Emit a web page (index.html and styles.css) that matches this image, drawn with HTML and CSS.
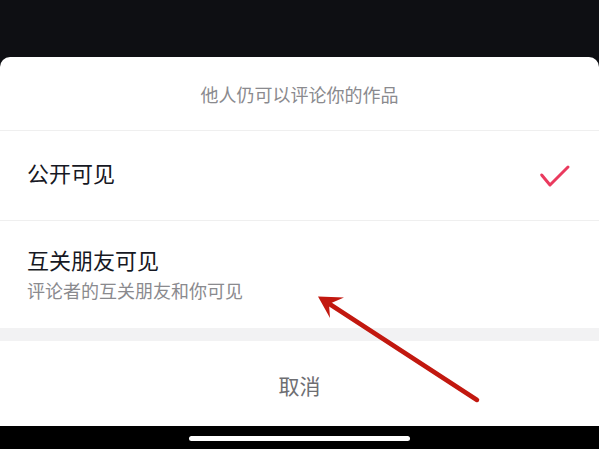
FILE: index.html
```html
<!DOCTYPE html>
<html lang="zh-CN">
<head>
<meta charset="utf-8">
<title>评论权限</title>
<link rel="stylesheet" href="styles.css">
</head>
<body>
<div class="screen">
  <div class="top-area"></div>
  <div class="sheet">
    <div class="sheet-header">他人仍可以评论你的作品</div>
    <div class="option option-single">
      <span class="option-title">公开可见</span>
      <svg class="check" width="32" height="24" viewBox="0 0 32 24">
        <polyline points="2.7,11 11,21 29,3" fill="none" stroke="#ea3a5e" stroke-width="3" stroke-linecap="round" stroke-linejoin="round"/>
      </svg>
    </div>
    <div class="option option-double">
      <span class="option-title">互关朋友可见</span>
      <span class="option-sub">评论者的互关朋友和你可见</span>
    </div>
    <div class="gap-band"></div>
    <div class="cancel">取消</div>
  </div>
  <div class="home-bar"><div class="home-indicator"></div></div>
  <svg class="annotation" width="599" height="449" viewBox="0 0 599 449">
    <line x1="477" y1="400" x2="328" y2="303" stroke="#c2180f" stroke-width="4.5" stroke-linecap="round"/>
    <polygon points="318,296.5 344,297.5 329,304 330,318" fill="#c2180f"/>
  </svg>
</div>
</body>
</html>
```

FILE: styles.css
```css
* { box-sizing: border-box; }
html, body {
  margin: 0;
  padding: 0;
  background: #000;
}
body {
  font-family: "Noto Sans CJK SC", "Noto Sans", sans-serif;
}
.screen {
  position: relative;
  width: 599px;
  height: 449px;
  overflow: hidden;
  display: flex;
  flex-direction: column;
  background: #0e0f13;
}
.top-area {
  height: 57px;
  flex: none;
}
.sheet {
  background: #fff;
  border-radius: 10px 10px 0 0;
  display: flex;
  flex-direction: column;
  flex: none;
}
.sheet-header {
  height: 74px;
  padding-top: 0;
  border-bottom: 1px solid #efefef;
  display: flex;
  align-items: center;
  justify-content: center;
  font-size: 18px;
  color: #8a8a8e;
}
.option {
  padding: 0 28px 0 27px;
  border-bottom: 1px solid #efefef;
}
.option-single {
  height: 90px;
  padding-bottom: 7px;
  display: flex;
  align-items: center;
  justify-content: space-between;
}
.option-single .check {
  margin-top: 7px;
}
.option-double {
  height: 107px;
  border-bottom: none;
  padding-top: 24px;
  display: flex;
  flex-direction: column;
  gap: 6px;
}
.option-title {
  font-size: 22px;
  line-height: 28px;
  color: #161823;
}
.option-sub {
  font-size: 18px;
  line-height: 22px;
  color: #8a8a8e;
}
.check { display: block; }
.gap-band {
  height: 13px;
  background: #f2f2f3;
}
.cancel {
  height: 85px;
  padding-top: 29px;
  text-align: center;
  font-size: 21px;
  line-height: 30px;
  color: #6e6e72;
}
.home-bar {
  height: 23px;
  flex: none;
  background: #000;
  padding-top: 10px;
  display: flex;
  justify-content: center;
}
.home-indicator {
  width: 221px;
  height: 5px;
  border-radius: 3px;
  background: #fff;
}
.annotation {
  position: absolute;
  left: 0;
  top: 0;
  pointer-events: none;
}
```
